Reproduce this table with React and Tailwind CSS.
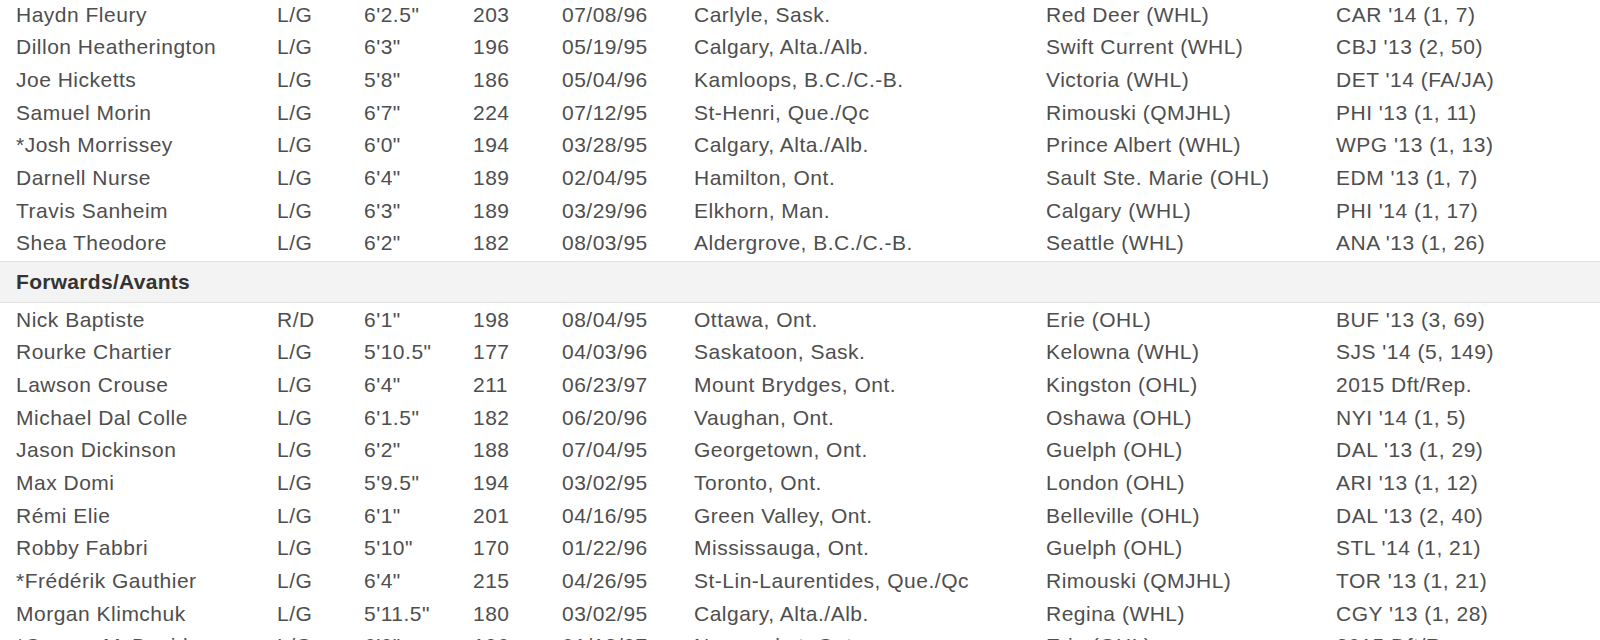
import React from 'react';

const DEFENCE = [
  ['Haydn Fleury', 'L/G', '6\'2.5"', '203', '07/08/96', 'Carlyle, Sask.', 'Red Deer (WHL)', "CAR '14 (1, 7)"],
  ['Dillon Heatherington', 'L/G', '6\'3"', '196', '05/19/95', 'Calgary, Alta./Alb.', 'Swift Current (WHL)', "CBJ '13 (2, 50)"],
  ['Joe Hicketts', 'L/G', '5\'8"', '186', '05/04/96', 'Kamloops, B.C./C.-B.', 'Victoria (WHL)', "DET '14 (FA/JA)"],
  ['Samuel Morin', 'L/G', '6\'7"', '224', '07/12/95', 'St-Henri, Que./Qc', 'Rimouski (QMJHL)', "PHI '13 (1, 11)"],
  ['*Josh Morrissey', 'L/G', '6\'0"', '194', '03/28/95', 'Calgary, Alta./Alb.', 'Prince Albert (WHL)', "WPG '13 (1, 13)"],
  ['Darnell Nurse', 'L/G', '6\'4"', '189', '02/04/95', 'Hamilton, Ont.', 'Sault Ste. Marie (OHL)', "EDM '13 (1, 7)"],
  ['Travis Sanheim', 'L/G', '6\'3"', '189', '03/29/96', 'Elkhorn, Man.', 'Calgary (WHL)', "PHI '14 (1, 17)"],
  ['Shea Theodore', 'L/G', '6\'2"', '182', '08/03/95', 'Aldergrove, B.C./C.-B.', 'Seattle (WHL)', "ANA '13 (1, 26)"],
];

const FORWARDS = [
  ['Nick Baptiste', 'R/D', '6\'1"', '198', '08/04/95', 'Ottawa, Ont.', 'Erie (OHL)', "BUF '13 (3, 69)"],
  ['Rourke Chartier', 'L/G', '5\'10.5"', '177', '04/03/96', 'Saskatoon, Sask.', 'Kelowna (WHL)', "SJS '14 (5, 149)"],
  ['Lawson Crouse', 'L/G', '6\'4"', '211', '06/23/97', 'Mount Brydges, Ont.', 'Kingston (OHL)', '2015 Dft/Rep.'],
  ['Michael Dal Colle', 'L/G', '6\'1.5"', '182', '06/20/96', 'Vaughan, Ont.', 'Oshawa (OHL)', "NYI '14 (1, 5)"],
  ['Jason Dickinson', 'L/G', '6\'2"', '188', '07/04/95', 'Georgetown, Ont.', 'Guelph (OHL)', "DAL '13 (1, 29)"],
  ['Max Domi', 'L/G', '5\'9.5"', '194', '03/02/95', 'Toronto, Ont.', 'London (OHL)', "ARI '13 (1, 12)"],
  ['Rémi Elie', 'L/G', '6\'1"', '201', '04/16/95', 'Green Valley, Ont.', 'Belleville (OHL)', "DAL '13 (2, 40)"],
  ['Robby Fabbri', 'L/G', '5\'10"', '170', '01/22/96', 'Mississauga, Ont.', 'Guelph (OHL)', "STL '14 (1, 21)"],
  ['*Frédérik Gauthier', 'L/G', '6\'4"', '215', '04/26/95', 'St-Lin-Laurentides, Que./Qc', 'Rimouski (QMJHL)', "TOR '13 (1, 21)"],
  ['Morgan Klimchuk', 'L/G', '5\'11.5"', '180', '03/02/95', 'Calgary, Alta./Alb.', 'Regina (WHL)', "CGY '13 (1, 28)"],
  ['*Connor McDavid', 'L/G', '6\'0"', '196', '01/13/97', 'Newmarket, Ont.', 'Erie (OHL)', '2015 Dft/Rep.'],
];

const cols = 'grid grid-cols-[261px_87px_109px_89px_132px_352px_290px_1fr]';

function Row({ r }) {
  return (
    <div className={`${cols} h-[32.7px] items-center pl-[16px] text-[21px] tracking-[0.5px] text-[#4e4e4e] whitespace-nowrap`}>
      {r.map((c, i) => <div key={i}>{c}</div>)}
    </div>
  );
}

export default function App() {
  return (
    <div className="w-[1600px] h-[640px] overflow-hidden bg-white font-['Liberation_Sans',Arial,sans-serif]">
      <div className="-mt-[2px]">
        {DEFENCE.map(r => <Row key={r[0]} r={r} />)}
        <div className="mt-[1.5px] h-[42px] flex items-center pl-[16px] bg-[#f3f3f3] border-y border-[#e2e2e2] text-[21px] tracking-[0.3px] font-bold text-[#333]">
          Forwards/Avants
        </div>
        {FORWARDS.map(r => <Row key={r[0]} r={r} />)}
      </div>
    </div>
  );
}
